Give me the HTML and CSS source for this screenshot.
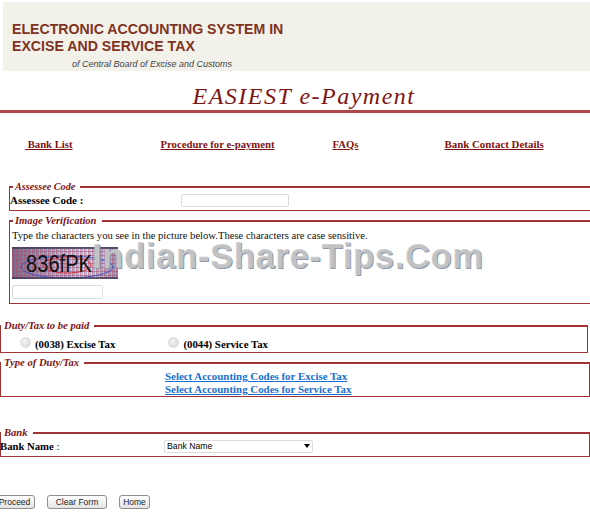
FILE: index.html
```html
<!DOCTYPE html>
<html lang="en">
<head>
<meta charset="utf-8">
<title>EASIEST e-Payment</title>
<link rel="stylesheet" href="styles.css">
</head>
<body>
<header class="banner">
  <h1 class="banner-title">ELECTRONIC ACCOUNTING SYSTEM IN<br>EXCISE AND SERVICE TAX</h1>
  <p class="banner-sub">of Central Board of Excise and Customs</p>
</header>
<h2 class="page-title">EASIEST e-Payment</h2>
<div class="rule"></div>
<nav class="nav">
  <a class="nav-bank" href="#">&nbsp;Bank List</a>
  <a class="nav-proc" href="#">Procedure for e-payment</a>
  <a class="nav-faq" href="#">FAQs</a>
  <a class="nav-contact" href="#">Bank Contact Details</a>
</nav>
<form class="form">
  <fieldset class="box box-assessee">
    <legend>Assessee Code</legend>
    <div class="row-assessee">
      <label class="strong">Assessee Code :</label>
      <input class="text-in text-code" type="text">
    </div>
  </fieldset>
  <fieldset class="box box-image">
    <legend>Image Verification</legend>
    <p class="hint">Type the characters you see in the picture below.These characters are case sensitive.</p>
    <svg class="captcha" width="106" height="32" viewBox="0 0 106 32">
      <defs>
        <pattern id="gridr" width="4" height="4" patternUnits="userSpaceOnUse">
          <path d="M0 0V4M0 0H4" stroke="#b5446a" stroke-width="1" fill="none"/>
          <path d="M2 0V4" stroke="#5a5aa8" stroke-width="0.6" fill="none"/>
        </pattern>
        <linearGradient id="fade" x1="0" x2="1" y1="0" y2="0">
          <stop offset="0" stop-color="#77727f"/>
          <stop offset="0.45" stop-color="#c9bfd0"/>
          <stop offset="0.7" stop-color="#e7dfe9"/>
          <stop offset="1" stop-color="#a9a2b2"/>
        </linearGradient>
      </defs>
      <rect width="106" height="32" fill="url(#fade)"/>
      <rect width="106" height="32" fill="url(#gridr)"/>
      <ellipse cx="55" cy="20" rx="46" ry="11" fill="none" stroke="#3b58c0" stroke-width="1"/>
      <ellipse cx="55" cy="18" rx="24" ry="8" fill="none" stroke="#d02a3a" stroke-width="1"/>
      <path d="M0 1H106M0 31H106" stroke="#3a3a55" stroke-width="1.5"/>
      <text class="captcha-text" x="14" y="25" textLength="66" lengthAdjust="spacingAndGlyphs">836fPK</text>
    </svg>
    <input class="text-in text-image" type="text">
  </fieldset>
  <fieldset class="box box-duty">
    <legend>Duty/Tax to be paid</legend>
    <div class="row-radio">
      <label class="radio-item radio-excise"><input class="radio" type="radio" name="duty" disabled>(0038) Excise Tax</label>
      <label class="radio-item"><input class="radio" type="radio" name="duty" disabled>(0044) Service Tax</label>
    </div>
  </fieldset>
  <fieldset class="box box-type">
    <legend>Type of Duty/Tax</legend>
    <div class="codes">
      <a href="#">Select Accounting Codes for Excise Tax</a>
      <a href="#">Select Accounting Codes for Service Tax</a>
    </div>
  </fieldset>
  <fieldset class="box box-bank">
    <legend>Bank</legend>
    <div class="row-bank">
      <label class="bank-label"><b>Bank Name</b> :</label>
      <div class="select-wrap">
        <select class="select"><option>Bank Name</option></select>
      </div>
    </div>
  </fieldset>
  <div class="actions">
    <button class="btn btn-proceed" type="button">Proceed</button>
    <button class="btn btn-clear" type="reset">Clear Form</button>
    <button class="btn btn-home" type="button">Home</button>
  </div>
</form>
<div class="watermark">Indian-Share-Tips.Com</div>
</body>
</html>
```
FILE: styles.css
```css
* { box-sizing: border-box; }
html, body { margin: 0; padding: 0; }
body {
  width: 590px;
  height: 515px;
  overflow: hidden;
  position: relative;
  background: #fff;
  color: #000;
  font-family: "Liberation Serif", serif;
  font-size: 11px;
}
.banner {
  margin: 2px 0 0 3px;
  height: 69px;
  background: #f2f1ea;
  padding-top: 19px;
}
.banner-title {
  margin: 0 0 0 9px;
  font: bold 14.15px/17px "Liberation Sans", sans-serif;
  color: #7f3322;
}
.banner-sub {
  margin: 4px 0 0 69px;
  font: italic 400 9px/11px "Liberation Sans", sans-serif;
  color: #444;
}
.page-title {
  margin: 12px 0 0;
  padding-left: 18px;
  height: 27px;
  text-align: center;
  font: italic 400 24px/27px "Liberation Serif", serif;
  letter-spacing: 1.5px;
  color: #7d1414;
}
.rule {
  height: 3px;
  background: #ad4747;
}
.nav {
  display: flex;
  height: 14px;
  margin-top: 25px;
  line-height: 13px;
  font-weight: bold;
  font-size: 10.7px;
}
.nav a { color: #7d1414; }
.nav-bank { margin-left: 25px; }
.nav-proc { margin-left: 88px; }
.nav-faq { margin-left: 58px; }
.nav-contact { margin-left: 86px; font-size: 10.9px; }
.form { margin: 0; }
.box {
  margin: 0;
  padding: 0;
  min-width: 0;
  border: 1px solid #a03434;
  border-width: 2px 0 1px 1px;
}
.box legend {
  padding: 0 5px 0 2px;
  margin-left: 3px;
  height: 12px;
  line-height: 11px;
  font-size: 10.6px;
  font-style: italic;
  font-weight: bold;
  color: #7d1414;
}
.box-assessee {
  margin: 29px 0 0 9px;
  height: 30px;
}
.box-assessee legend { font-size: 10.2px; }
.row-assessee {
  display: flex;
  align-items: center;
  height: 14px;
}
.strong { font-weight: bold; font-size: 11px; margin-right: 98px; }
.text-in {
  border: 1px solid #dcdcdc;
  border-radius: 2px;
  background: #fff;
  height: 13px;
  padding: 0;
}
.text-code { width: 108px; }
.box-image {
  margin: 4px 0 0 9px;
  height: 89px;
}
.hint {
  margin: 2px 0 0 2px;
  font-size: 10.6px;
  line-height: 14px;
  color: #111;
}
.captcha {
  display: block;
  margin: 4px 0 0 2px;
}
.captcha-text {
  font: 23px "Liberation Sans", sans-serif;
  fill: #111;
}
.text-image {
  display: block;
  width: 91px;
  height: 14px;
  margin: 6px 0 0 2px;
}
.box-duty {
  margin: 16px 2px 0 0;
  height: 33px;
  border-right-width: 1px;
}
.box-duty legend { margin-left: 0; padding-left: 3px; }
.row-radio {
  display: flex;
  margin: 5px 0 0 19px;
  font-weight: bold;
  font-size: 10.8px;
  line-height: 14px;
}
.radio-item { display: flex; align-items: center; }
.radio-excise { margin-right: 53px; }
.radio {
  appearance: none;
  width: 11px;
  height: 11px;
  margin: -4px 4px 0 0;
  border-radius: 50%;
  border: 1px solid #dcdcdc;
  background: radial-gradient(circle at 40% 40%, #f4f4f4, #d4d4d4);
}
.box-type {
  margin: 4px 0 0;
  height: 40px;
  border-right-width: 1px;
}
.box-type legend { margin-left: 0; padding-left: 3px; }
.codes {
  display: flex;
  flex-direction: column;
  margin: 1px 0 0 164px;
  font-weight: bold;
  font-size: 10.9px;
  line-height: 13px;
}
.codes a { color: #1a6fd0; }
.box-bank {
  margin: 30px 0 0;
  height: 30px;
  border-right-width: 1px;
}
.box-bank legend { margin-left: 0; padding-left: 3px; }
.row-bank {
  display: flex;
  align-items: center;
  height: 14px;
}
.bank-label { font-size: 10.7px; width: 164px; margin-left: -1px; }
.select-wrap {
  position: relative;
  width: 149px;
  height: 13px;
}
.select-wrap::after {
  content: "";
  position: absolute;
  right: 3px;
  top: 4px;
  border: 3px solid transparent;
  border-top: 4px solid #000;
  border-bottom: 0;
}
.select {
  appearance: none;
  display: block;
  width: 100%;
  height: 13px;
  padding: 0 0 0 2px;
  border: 1px solid #dcdcdc;
  border-radius: 2px;
  background: #fff;
  font: 8.7px/11px "Liberation Sans", sans-serif;
  color: #000;
}
.actions {
  display: flex;
  margin: 38px 0 0 -6px;
}
.btn {
  height: 14px;
  padding: 0;
  border: 1px solid #8f8f8f;
  border-radius: 3px;
  background: linear-gradient(#fff, #e4e4e4);
  font: 8.5px/12px "Liberation Sans", sans-serif;
  color: #222;
}
.btn-proceed { width: 41px; }
.btn-clear { width: 60px; margin-left: 12px; }
.btn-home { width: 31px; margin-left: 12px; }
.watermark {
  position: absolute;
  left: 92px;
  top: 237px;
  font: bold 34.5px/38px "Liberation Sans", sans-serif;
  letter-spacing: 0.7px;
  color: rgba(200, 200, 200, 0.9);
  text-shadow: 1px 1px 0 #8d98a8;
  white-space: nowrap;
  pointer-events: none;
}
```
